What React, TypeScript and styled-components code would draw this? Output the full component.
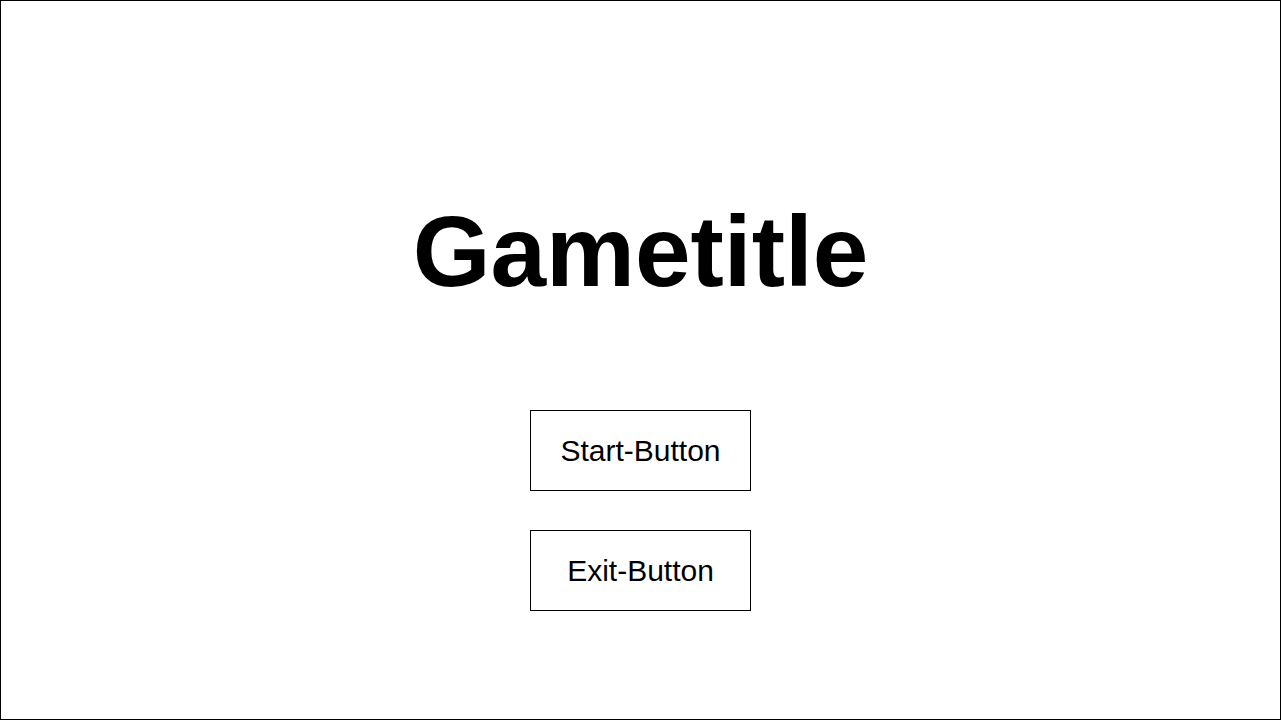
import React from "react";
import styled, { createGlobalStyle } from "styled-components";

const GlobalStyle = createGlobalStyle`
  html, body {
    margin: 0;
    padding: 0;
    background: #ffffff;
  }
  body {
    font-family: "Liberation Sans", Arial, sans-serif;
  }
`;

const Screen = styled.div`
  box-sizing: border-box;
  width: 1281px;
  height: 720px;
  border: 1px solid #000000;
  background: #ffffff;
  display: flex;
  flex-direction: column;
  align-items: center;
  padding-top: 193px;
`;

const Title = styled.h1`
  margin: 0 0 101px 0;
  font-family: "Liberation Sans", Arial, sans-serif;
  font-weight: 700;
  font-size: 100px;
  line-height: 115px;
  color: #000000;
`;

const Menu = styled.div`
  display: flex;
  flex-direction: column;
  align-items: center;
  gap: 39px;
`;

const MenuButton = styled.button`
  box-sizing: border-box;
  width: 221px;
  height: 81px;
  border: 1px solid #000000;
  border-radius: 0;
  background: #ffffff;
  color: #000000;
  font-family: "Liberation Sans", Arial, sans-serif;
  font-size: 30px;
  font-weight: 400;
  padding: 0;
  display: flex;
  align-items: center;
  justify-content: center;
  cursor: pointer;
`;

export default function App() {
  return (
    <>
      <GlobalStyle />
      <Screen>
        <Title>Gametitle</Title>
        <Menu>
          <MenuButton>Start-Button</MenuButton>
          <MenuButton>Exit-Button</MenuButton>
        </Menu>
      </Screen>
    </>
  );
}
